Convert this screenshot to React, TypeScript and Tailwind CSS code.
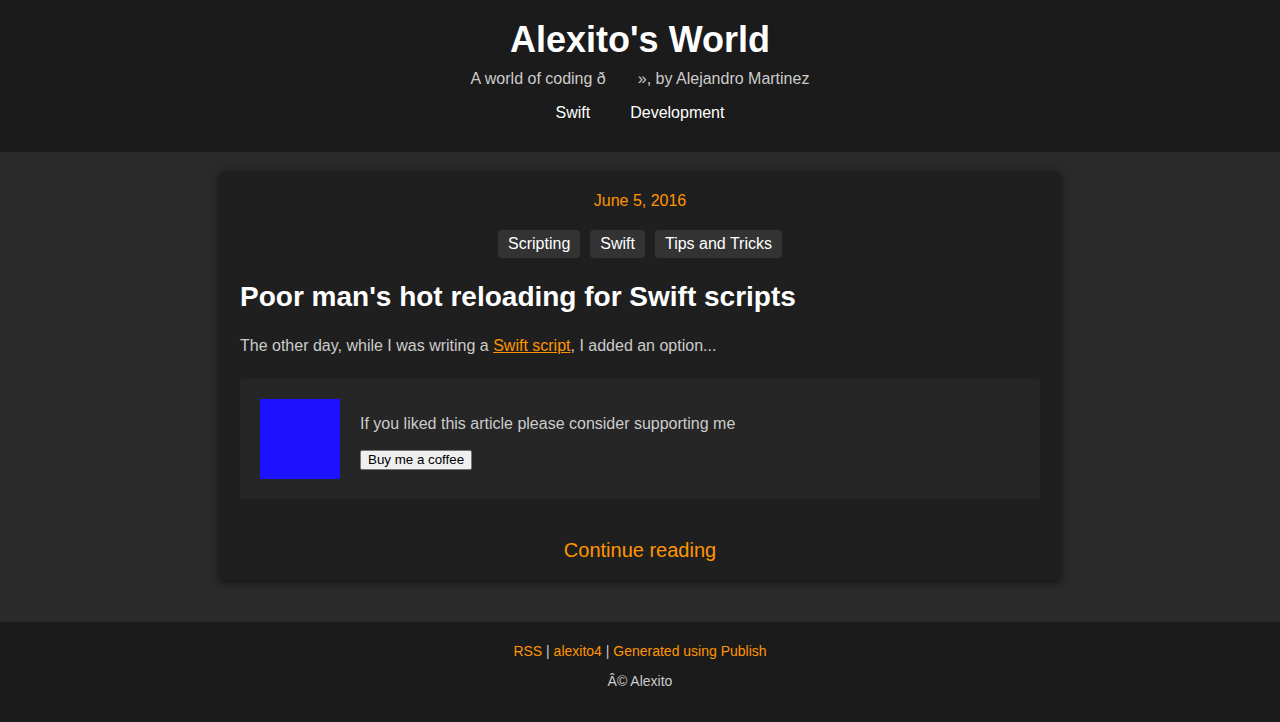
import React from 'react';

const TAGS = ['Scripting', 'Swift', 'Tips and Tricks'];

const Header: React.FC = () => (
  <header className="bg-[#1b1b1b] pt-[18px] pb-[29px] text-center">
    <h1 className="text-[36px] leading-[44px] font-bold text-white">Alexito's World</h1>
    <p className="text-[16px] leading-[24px] text-[#cccccc] mt-[5px]">
      A world of coding ð<span className="inline-block w-[32px]"></span>», by Alejandro Martinez
    </p>
    <nav className="flex justify-center gap-[40px] mt-[12px] text-[16px] leading-[20px] text-white">
      <a href="#">Swift</a>
      <a href="#">Development</a>
    </nav>
  </header>
);

const SupportBox: React.FC = () => (
  <div className="bg-[#262626] rounded-[4px] p-[20px] flex gap-[20px] mt-[23px]">
    <div className="w-[80px] h-[80px] bg-[#1c12ff] shrink-0"></div>
    <div className="pt-[15px]">
      <p className="text-[16px] leading-[20px] text-[#cccccc]">If you liked this article please consider supporting me</p>
      <button className="mt-[16px] bg-[#efefef] text-black text-[13.333px] leading-[16px] px-[7px] py-[1px] border border-[#767676] rounded-[2px]">
        Buy me a coffee
      </button>
    </div>
  </div>
);

const ArticleCard: React.FC = () => (
  <article className="w-[840px] mx-auto bg-[#1f1f1f] rounded-[4px] shadow-[0_2px_10px_rgba(0,0,0,0.6)] px-[20px] pt-[19px] pb-[16px]">
    <p className="text-center text-[16px] leading-[20px] text-[#ff9500]">June 5, 2016</p>
    <div className="flex justify-center gap-[10px] mt-[19px]">
      {TAGS.map((tag) => (
        <span key={tag} className="bg-[#333333] text-white text-[16px] leading-[20px] px-[10px] py-[4px] rounded-[4px]">
          {tag}
        </span>
      ))}
    </div>
    <h2 className="text-[28px] leading-[34px] font-bold text-white mt-[22px]">Poor man's hot reloading for Swift scripts</h2>
    <p className="text-[16px] leading-[20px] text-[#cccccc] mt-[22px]">
      The other day, while I was writing a <a href="#" className="text-[#ff9500] underline">Swift script</a>, I added an option...
    </p>
    <SupportBox />
    <p className="text-center mt-[39px]">
      <a href="#" className="text-[20px] leading-[24px] text-[#ff9500]">Continue reading</a>
    </p>
  </article>
);

const Footer: React.FC = () => (
  <footer className="bg-[#1b1b1b] pt-[20px] pb-[32px] text-center text-[14px] leading-[18px]">
    <p className="text-[#cccccc]">
      <a href="#" className="text-[#ff9500]">RSS</a> | <a href="#" className="text-[#ff9500]">alexito4</a> |{' '}
      <a href="#" className="text-[#ff9500]">Generated using Publish</a>
    </p>
    <p className="text-[#cccccc] mt-[12px]">Â© Alexito</p>
  </footer>
);

export default function App() {
  return (
    <div className="min-h-[722px] bg-[#2a2a2a] font-['Liberation_Sans',Arial,sans-serif] flex flex-col">
      <Header />
      <main className="flex-1 pt-[20px] pb-[42px]">
        <ArticleCard />
      </main>
      <Footer />
    </div>
  );
}
